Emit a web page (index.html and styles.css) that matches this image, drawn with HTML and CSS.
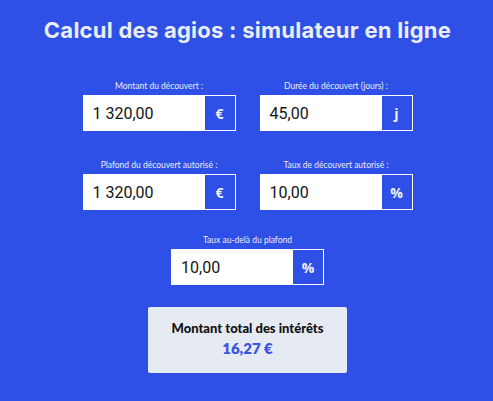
FILE: index.html
```html
<!DOCTYPE html>
<html lang="fr">
<head>
<meta charset="utf-8">
<title>Calcul des agios</title>
<link rel="stylesheet" href="styles.css">
</head>
<body>
<main class="sim">
  <h1 class="title">Calcul des agios : simulateur en ligne</h1>
  <div class="row">
    <div class="field">
      <label class="label">Montant du découvert :</label>
      <div class="box"><span class="value">1 320,00</span><span class="suffix">€</span></div>
    </div>
    <div class="field">
      <label class="label">Durée du découvert (jours) :</label>
      <div class="box"><span class="value">45,00</span><span class="suffix">j</span></div>
    </div>
  </div>
  <div class="row row2">
    <div class="field">
      <label class="label">Plafond du découvert autorisé :</label>
      <div class="box"><span class="value">1 320,00</span><span class="suffix">€</span></div>
    </div>
    <div class="field">
      <label class="label">Taux de découvert autorisé :</label>
      <div class="box"><span class="value">10,00</span><span class="suffix">%</span></div>
    </div>
  </div>
  <div class="row row3">
    <div class="field">
      <label class="label">Taux au-delà du plafond</label>
      <div class="box"><span class="value">10,00</span><span class="suffix">%</span></div>
    </div>
  </div>
  <div class="result">
    <div class="result-title">Montant total des intérêts</div>
    <div class="result-value">16,27 €</div>
  </div>
</main>
</body>
</html>
```
FILE: styles.css
```css
html, body {
  margin: 0;
  padding: 0;
  background: #2f50e6;
  height: 100%;
}
body {
  font-family: Lato, "Open Sans", sans-serif;
  color: #e9edf5;
}
.sim {
  display: flex;
  flex-direction: column;
  align-items: center;
  padding-top: 15px;
  padding-left: 2px;
}
.title {
  margin: 0;
  font-family: Inter, Lato, sans-serif;
  font-size: 22px;
  font-weight: 700;
  line-height: 30px;
  color: #e9edf5;
  letter-spacing: 0.25px;
}
.row {
  display: flex;
  gap: 24px;
  margin-top: 36px;
}
.row2 {
  margin-top: 29px;
}
.row3 {
  margin-top: 25px;
}
.field {
  display: flex;
  flex-direction: column;
  align-items: center;
  width: 153px;
}
.label {
  font-size: 8.5px;
  line-height: 10px;
  height: 10px;
  color: #e9edf5;
  margin-bottom: 4px;
  white-space: nowrap;
}
.box {
  display: flex;
  width: 153px;
  height: 36px;
  box-sizing: border-box;
  border: 1px solid #ffffff;
  background: #ffffff;
}
.value {
  flex: 1;
  display: flex;
  align-items: center;
  padding-left: 9px;
  font-family: Roboto, "Open Sans", sans-serif;
  font-size: 16px;
  color: #141414;
}
.suffix {
  width: 30px;
  display: flex;
  align-items: center;
  justify-content: center;
  background: #2f50e6;
  color: #f0f2f8;
  font-family: "Open Sans", sans-serif;
  font-weight: 700;
  font-size: 14px;
}
.result {
  margin-top: 22px;
  width: 199px;
  height: 66px;
  box-sizing: border-box;
  background: #e6eaf2;
  border-radius: 2px;
  display: flex;
  flex-direction: column;
  align-items: center;
  padding-top: 13px;
}
.result-title {
  font-size: 13px;
  font-weight: 900;
  color: #111111;
  line-height: 16px;
}
.result-value {
  margin-top: 3px;
  font-size: 15px;
  font-weight: 800;
  color: #3a55e0;
  line-height: 18px;
}
```
